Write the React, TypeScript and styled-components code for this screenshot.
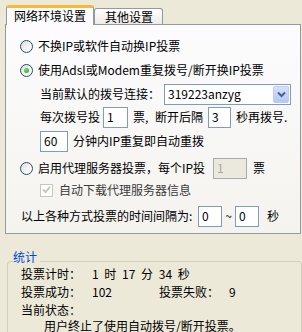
import React from 'react';
import styled, { createGlobalStyle } from 'styled-components';

const FONT = `"Noto Sans CJK SC", "Noto Sans", sans-serif`;

const Global = createGlobalStyle`
  body {
    margin: 0;
    background: #ece9d8;
  }
`;

export default function App() {
  return (
    <>
      <Global />
      <Page>
        <TabStrip>
          <Tab $active>网络环境设置</Tab>
          <Tab>其他设置</Tab>
        </TabStrip>

        <Panel>
          <Row $pl={14}>
            <Radio />
            <Text $ml={5}>不换IP或软件自动换IP投票</Text>
          </Row>

          <Row $pl={14}>
            <Radio $checked />
            <Text $ml={5}>使用Adsl或Modem重复拨号/断开换IP投票</Text>
          </Row>

          <Row $pl={34}>
            <Text $w={124}>当前默认的拨号连接：</Text>
            <Combo>
              <span className="value">319223anzyg</span>
              <ComboButton>
                <svg width="9" height="7" viewBox="0 0 9 7">
                  <path d="M1 1.5 L4.5 5 L8 1.5" fill="none" stroke="#4d6185" strokeWidth="2" />
                </svg>
              </ComboButton>
            </Combo>
          </Row>

          <Row $pl={34} $h={22}>
            <Text $w={63}>每次拨号投</Text>
            <Field $w={25}>1</Field>
            <Text $ml={5} $w={22}>票,</Text>
            <Text>断开后隔</Text>
            <Field $w={23} $ml={5}>3</Field>
            <Text $ml={5}>秒再拨号.</Text>
          </Row>

          <Row $pl={34} $h={22} $mt={2}>
            <Field $w={28}>60</Field>
            <Text $ml={5}>分钟内IP重复即自动重拨</Text>
          </Row>

          <Row $pl={14} $h={22} $mt={5}>
            <Radio />
            <Text $ml={5} $w={175}>启用代理服务器投票，每个IP投</Text>
            <Field $w={34} $disabled>1</Field>
            <Text $ml={6}>票</Text>
          </Row>

          <Row $pl={34} $h={22}>
            <Check>
              <svg width="9" height="8" viewBox="0 0 9 8">
                <path d="M1 3.5 L3.5 6 L8 1" fill="none" stroke="#cac8bb" strokeWidth="2" />
              </svg>
            </Check>
            <Text $ml={6} $muted>自动下载代理服务器信息</Text>
          </Row>

          <Row $pl={15} $h={22} $mt={4}>
            <Text $w={177}>以上各种方式投票的时间间隔为:</Text>
            <Field $w={24}>0</Field>
            <Tilde>~</Tilde>
            <Field $w={24}>0</Field>
            <Text $ml={8}>秒</Text>
          </Row>
        </Panel>

        <GroupBox>
          <GroupHeader>
            <GroupCap />
            <GroupLabel>统计</GroupLabel>
            <GroupFill />
          </GroupHeader>
          <GroupBody>
            <StatRow>
              <StatLabel $w={71}>投票计时：</StatLabel>
              <StatValue>1 时 17 分 34 秒</StatValue>
            </StatRow>
            <StatRow>
              <StatLabel $w={71}>投票成功：</StatLabel>
              <StatValue $w={67}>102</StatValue>
              <StatLabel $w={70}>投票失败：</StatLabel>
              <StatValue>9</StatValue>
            </StatRow>
            <StatRow>
              <StatLabel>当前状态：</StatLabel>
            </StatRow>
            <StatRow $h={13} $indent={23}>
              <StatLabel $tight>用户终止了使用自动拨号/断开投票。</StatLabel>
            </StatRow>
          </GroupBody>
        </GroupBox>
      </Page>
    </>
  );
}

const Page = styled.div`
  width: 302px;
  height: 332px;
  box-sizing: border-box;
  padding: 5px 0 0 5px;
  overflow: hidden;
  background: #ece9d8;
  font-family: ${FONT};
  font-size: 12px;
  color: #000;
`;

const TabStrip = styled.div`
  display: flex;
  align-items: flex-end;
  height: 19px;
  padding-left: 1px;
`;

const Tab = styled.div<{ $active?: boolean }>`
  position: relative;
  box-sizing: border-box;
  display: flex;
  align-items: center;
  border: 1px solid #919b9c;
  border-bottom: none;
  border-radius: 3px 3px 0 0;
  line-height: 12px;
  white-space: nowrap;

  ${(p) =>
    p.$active
      ? `
    z-index: 1;
    height: 20px;
    margin-bottom: -1px;
    padding: 0 7px 1px;
    background: #fcfcfe;
    border-top: 3px solid #f9b838;
  `
      : `
    height: 16px;
    padding: 1px 9px 0 10px;
    background: linear-gradient(#ffffff, #ecebe6);
  `}
`;

const Panel = styled.div`
  box-sizing: border-box;
  width: 296px;
  height: 210px;
  padding-top: 9px;
  border: 1px solid #919b9c;
  background: linear-gradient(#fcfcfe, #f4f3ee);
  display: flex;
  flex-direction: column;
`;

const Row = styled.div<{ $pl?: number; $h?: number; $mt?: number }>`
  display: flex;
  align-items: center;
  height: ${(p) => p.$h ?? 24}px;
  margin-top: ${(p) => p.$mt ?? 0}px;
  padding-left: ${(p) => p.$pl ?? 0}px;
  white-space: nowrap;
`;

const Text = styled.span<{ $ml?: number; $w?: number; $muted?: boolean }>`
  flex: none;
  margin-left: ${(p) => p.$ml ?? 0}px;
  ${(p) => (p.$w ? `width: ${p.$w}px;` : '')}
  color: ${(p) => (p.$muted ? '#3a3a3a' : '#000')};
  line-height: 14px;
`;

const Radio = styled.span<{ $checked?: boolean }>`
  flex: none;
  box-sizing: border-box;
  width: 13px;
  height: 13px;
  border-radius: 50%;
  border: 1px solid #1c5180;
  background: linear-gradient(135deg, #dcd9cf 0%, #f4f3ee 50%, #ffffff 100%);
  display: flex;
  align-items: center;
  justify-content: center;

  &::after {
    content: '';
    display: ${(p) => (p.$checked ? 'block' : 'none')};
    width: 5px;
    height: 5px;
    border-radius: 50%;
    background: radial-gradient(circle at 35% 35%, #6fe06f, #21a121);
  }
`;

const Check = styled.span`
  flex: none;
  box-sizing: border-box;
  width: 13px;
  height: 13px;
  border: 1px solid #cac8bb;
  background: #fff;
  display: flex;
  align-items: center;
  justify-content: center;
`;

const Field = styled.span<{ $w: number; $ml?: number; $disabled?: boolean }>`
  flex: none;
  box-sizing: border-box;
  width: ${(p) => p.$w}px;
  height: 21px;
  margin-left: ${(p) => p.$ml ?? 0}px;
  padding: 0 3px;
  border: 1px solid ${(p) => (p.$disabled ? '#a5acb5' : '#7f9db9')};
  background: ${(p) => (p.$disabled ? '#ebe9dd' : '#fff')};
  color: ${(p) => (p.$disabled ? '#aca899' : '#000')};
  display: flex;
  align-items: center;
  line-height: 14px;
`;

const Combo = styled.div`
  flex: none;
  box-sizing: border-box;
  width: 127px;
  height: 21px;
  border: 1px solid #7f9db9;
  background: #fff;
  display: flex;
  align-items: center;
  padding: 1px;

  .value {
    flex: 1;
    padding-left: 2px;
    line-height: 14px;
  }
`;

const ComboButton = styled.span`
  flex: none;
  box-sizing: border-box;
  width: 16px;
  height: 17px;
  border: 1px solid #b9cdf7;
  border-radius: 2px;
  background: linear-gradient(#d6e2fd, #b4c8f6);
  display: flex;
  align-items: center;
  justify-content: center;
`;

const Tilde = styled.span`
  flex: none;
  width: 13px;
  text-align: center;
  line-height: 14px;
`;

const GroupBox = styled.div`
  width: 295px;
  margin: 17px 0 0 2px;
`;

const GroupHeader = styled.div`
  display: flex;
  align-items: flex-end;
  height: 14px;
`;

const GroupCap = styled.div`
  flex: none;
  width: 5px;
  height: 3px;
  border-top: 1px solid #d0d0bf;
  border-left: 1px solid #d0d0bf;
  border-top-left-radius: 4px;
`;

const GroupLabel = styled.span`
  flex: none;
  align-self: flex-start;
  padding: 0 1px 0 0;
  color: #0046d5;
  line-height: 12px;
`;

const GroupFill = styled.div`
  flex: 1;
  height: 3px;
  margin-left: 2px;
  border-top: 1px solid #d0d0bf;
  border-right: 1px solid #d0d0bf;
  border-top-right-radius: 4px;
`;

const GroupBody = styled.div`
  height: 80px;
  padding-left: 13px;
  border-left: 1px solid #d0d0bf;
  border-right: 1px solid #d0d0bf;
`;

const StatRow = styled.div<{ $h?: number; $indent?: number }>`
  display: flex;
  align-items: center;
  height: ${(p) => p.$h ?? 18}px;
  padding-left: ${(p) => p.$indent ?? 0}px;
  white-space: nowrap;
`;

const StatLabel = styled.span<{ $w?: number; $tight?: boolean }>`
  flex: none;
  ${(p) => (p.$w ? `width: ${p.$w}px;` : '')}
  line-height: ${(p) => (p.$tight ? 12 : 14)}px;
`;

const StatValue = styled.span<{ $w?: number }>`
  flex: none;
  ${(p) => (p.$w ? `width: ${p.$w}px;` : '')}
  word-spacing: 3px;
  line-height: 14px;
`;
